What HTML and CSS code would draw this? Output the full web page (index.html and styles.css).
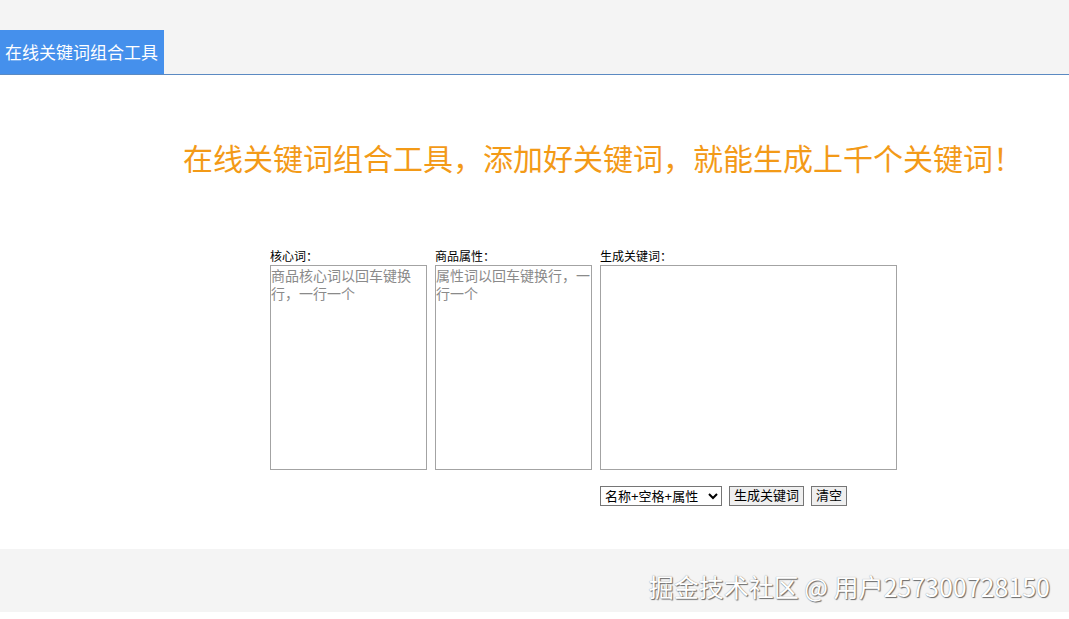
FILE: index.html
```html
<!DOCTYPE html>
<html lang="zh-CN">
<head>
    <meta charset="UTF-8">
    <meta name="viewport" content="width=device-width, initial-scale=1.0">
    <title>在线关键词组合工具</title>
    <link rel="stylesheet" href="styles.css">
</head>
<body>
    <div class="topbar">
        <div class="tab">在线关键词组合工具</div>
    </div>
    <div class="main">
        <h1 class="title">在线关键词组合工具，添加好关键词，就能生成上千个关键词！</h1>
        <div class="tool">
            <div class="col">
                <div class="label">核心词：</div>
                <textarea id="coreWords" class="box" placeholder="商品核心词以回车键换&#10;行，一行一个"></textarea>
            </div>
            <div class="col">
                <div class="label">商品属性：</div>
                <textarea id="attrWords" class="box" placeholder="属性词以回车键换行，一&#10;行一个"></textarea>
            </div>
            <div class="col">
                <div class="label">生成关键词：</div>
                <textarea id="result" class="box wide"></textarea>
                <div class="controls">
                    <select id="mode" class="ctrl">
                        <option>名称+空格+属性</option>
                        <option>名称+属性</option>
                        <option>属性+空格+名称</option>
                        <option>属性+名称</option>
                    </select>
                    <button class="ctrl btn" onclick="makeWords()">生成关键词</button>
                    <button class="ctrl btn" onclick="clearAll()">清空</button>
                </div>
            </div>
        </div>
    </div>
    <div class="footer"></div>
    <div class="watermark">掘金技术社区 @ 用户257300728150</div>

    <script type="text/javascript">
        function lines(id) {
            return document.getElementById(id).value.split("\n")
                .map(function(s) { return s.trim(); })
                .filter(function(s) { return s; });
        }

        function makeWords() {
            var core = lines("coreWords");
            var attr = lines("attrWords");
            var mode = document.getElementById("mode").selectedIndex;
            var out = [];
            core.forEach(function(c) {
                attr.forEach(function(a) {
                    if (mode == 0) out.push(c + " " + a);
                    else if (mode == 1) out.push(c + a);
                    else if (mode == 2) out.push(a + " " + c);
                    else out.push(a + c);
                });
            });
            document.getElementById("result").value = out.join("\n");
        }

        function clearAll() {
            document.getElementById("coreWords").value = "";
            document.getElementById("attrWords").value = "";
            document.getElementById("result").value = "";
        }
    </script>
</body>
</html>
```

FILE: styles.css
```css
body {
    margin: 0;
    font-family: "Noto Sans CJK SC", "Noto Sans", sans-serif;
    background-color: #fff;
    color: #000;
}
.topbar {
    background-color: #f4f4f4;
    padding-top: 30px;
    border-bottom: 1px solid #5b8ac2;
    display: flex;
}
.tab {
    background-color: #4590ec;
    color: #fff;
    font-size: 17px;
    height: 44px;
    line-height: 44px;
    padding: 0 5px;
    width: 154px;
    white-space: nowrap;
}
.main {
    padding-top: 62px;
    height: 412px;
}
.title {
    margin: 0;
    padding-left: 183px;
    font-size: 30px;
    font-weight: normal;
    line-height: 40px;
    color: #f39a17;
    white-space: nowrap;
}
.tool {
    display: flex;
    gap: 8px;
    margin: 70px 0 0 270px;
}
.label {
    font-size: 12px;
    line-height: 18px;
    height: 18px;
}
.box {
    display: block;
    box-sizing: border-box;
    width: 157px;
    height: 205px;
    margin: 0;
    border: 1px solid #a3a3a3;
    padding: 0;
    font-family: "Noto Sans CJK SC", sans-serif;
    font-size: 14px;
    line-height: 18px;
    resize: none;
    outline: none;
}
.box::placeholder {
    color: #8a8a8a;
}
.box.wide {
    width: 297px;
}
.controls {
    display: flex;
    align-items: center;
    gap: 7px;
    margin-top: 16px;
}
.ctrl {
    box-sizing: border-box;
    height: 20px;
    margin: 0;
    font-family: "Liberation Sans", "Noto Sans CJK SC", sans-serif;
    font-size: 13px;
    line-height: 16px;
    padding: 0 2px;
    border: 1px solid #767676;
    border-radius: 0;
    color: #000;
}
select.ctrl {
    width: 122px;
    padding: 0;
    background-color: #fff;
}
.btn {
    background-color: #efefef;
    padding: 0 4px;
}
.footer {
    background-color: #f4f4f4;
    height: 63px;
}
.watermark {
    position: absolute;
    right: 19px;
    top: 568px;
    font-size: 25px;
    line-height: 36px;
    color: #fff;
    text-shadow: 1px 1px 1px #6a6a6a, 0 0 1px #8a8a8a;
    white-space: nowrap;
}
```
